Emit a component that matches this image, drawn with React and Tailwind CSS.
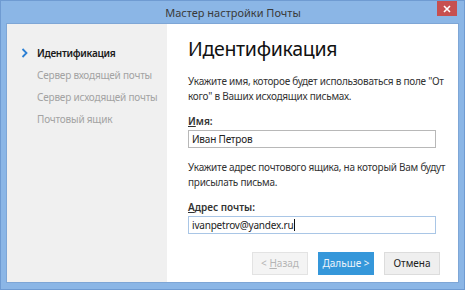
import React from "react";

const F = { fontFamily: '"Noto Sans", "Open Sans", sans-serif' };

function NavItem({ active, children }) {
  return (
    <div className="flex items-center h-[22px]">
      <div className="w-[30px] shrink-0 flex items-center justify-start pl-[14px]">
        {active && (
          <svg width="7" height="10" viewBox="0 0 7 10">
            <path d="M1.5 1 L5.5 5 L1.5 9" fill="none" stroke="#2b7fd4" strokeWidth="1.8" />
          </svg>
        )}
      </div>
      <span
        className={
          active
            ? "whitespace-nowrap text-[10px] tracking-[-0.3px] font-semibold text-[#1a1a1a]"
            : "whitespace-nowrap text-[10px] tracking-[-0.2px] text-[#a3a3a3]"
        }
      >
        {children}
      </span>
    </div>
  );
}

export default function App() {
  return (
    <div
      style={F}
      className="w-[465px] h-[290px] bg-[#8bb6e6] border border-[#6f9bd2] flex flex-col"
    >
      <div className="h-[22px] flex items-start shrink-0">
        <div className="w-[28px]" />
        <div className="flex-1 text-center text-[11px] leading-[23px] text-[#3a3a3a]">
          Мастер настройки Почты
        </div>
        <div className="w-[20px] h-[15px] bg-[#c75050] flex items-center justify-center mr-[7px]">
          <svg width="8" height="8" viewBox="0 0 8 8">
            <path d="M1 1 L7 7 M7 1 L1 7" stroke="#ffffff" strokeWidth="1.6" />
          </svg>
        </div>
      </div>
      <div className="flex-1 mx-[5px] mb-[6px] border border-[#7ea6d6] flex bg-white">
        <div className="w-[160px] shrink-0 bg-[#f0f0f0] pt-[18px] flex flex-col">
          <NavItem active>Идентификация</NavItem>
          <NavItem>Сервер входящей почты</NavItem>
          <NavItem>Сервер исходящей почты</NavItem>
          <NavItem>Почтовый ящик</NavItem>
        </div>
        <div className="flex-1 min-w-0 flex flex-col pl-[21px] pr-[18px]">
          <div className="text-[19.5px] tracking-[-0.3px] leading-[24px] text-[#111] mt-[13px]">
            Идентификация
          </div>
          <div className="whitespace-nowrap text-[10px] tracking-[-0.25px] leading-[15px] text-[#333] mt-[13px]">
            Укажите имя, которое будет использоваться в поле "От
            <br />
            кого" в Ваших исходящих письмах.
          </div>
          <div className="text-[10px] font-semibold text-[#333] mt-[11px] leading-[13px]">
            <span className="underline">И</span>мя:
          </div>
          <div className="w-[248px] h-[18px] border border-[#b8b8b8] mt-[2px] flex items-center px-[3px] text-[10px] tracking-[-0.2px] text-[#222]">
            Иван Петров
          </div>
          <div className="whitespace-nowrap text-[10px] tracking-[-0.25px] leading-[15px] text-[#333] mt-[12px]">
            Укажите адрес почтового ящика, на который Вам будут
            <br />
            присылать письма.
          </div>
          <div className="text-[10px] font-semibold text-[#333] mt-[11px] leading-[13px]">
            <span className="underline">А</span>дрес почты:
          </div>
          <div className="w-[248px] h-[18px] border border-[#a9c6e6] mt-[2px] flex items-center px-[3px] text-[10px] tracking-[-0.2px] text-[#222]">
            ivanpetrov@yandex.ru
            <span className="w-px h-[12px] bg-[#111] ml-px" />
          </div>
          <div className="flex justify-end gap-[10px] mt-auto mb-[7px]">
            <div className="w-[56px] h-[23px] bg-[#f4f4f4] border border-[#e3e3e3] flex items-center justify-center text-[10px] text-[#b5b5b5]">
              &lt;&nbsp;<span className="underline">Н</span>азад
            </div>
            <div className="w-[56px] h-[23px] bg-[#3597da] border border-[#3597da] flex items-center justify-center text-[10px] text-[#eef4fb]">
              <span className="underline">Д</span>альше &gt;
            </div>
            <div className="w-[56px] h-[23px] bg-[#efefef] border border-[#dcdcdc] flex items-center justify-center text-[10px] text-[#222]">
              Отмена
            </div>
          </div>
        </div>
      </div>
    </div>
  );
}
